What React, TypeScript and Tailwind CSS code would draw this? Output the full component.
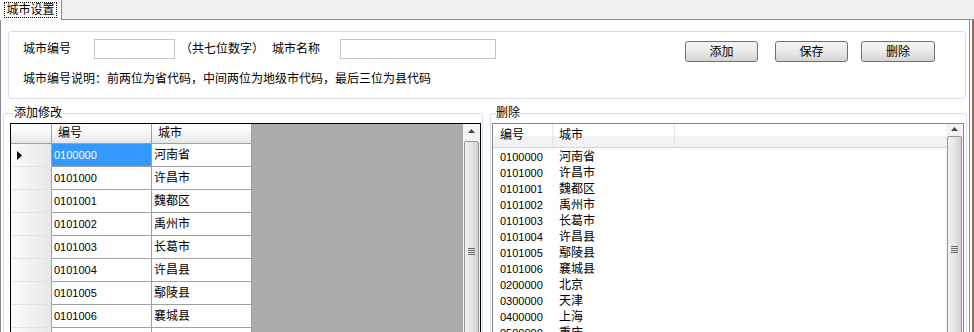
import type { ReactNode } from "react";

const cities: [string, string][] = [
  ["0100000", "河南省"],
  ["0101000", "许昌市"],
  ["0101001", "魏都区"],
  ["0101002", "禹州市"],
  ["0101003", "长葛市"],
  ["0101004", "许昌县"],
  ["0101005", "鄢陵县"],
  ["0101006", "襄城县"],
  ["0200000", "北京"],
  ["0300000", "天津"],
  ["0400000", "上海"],
  ["0500000", "重庆"],
];

function Button({ label, className }: { label: string; className: string }) {
  return (
    <button
      className={`mt-[2px] flex h-[21px] items-center justify-center rounded-[3px] border border-[#707070] bg-gradient-to-b from-[#f6f6f6] via-[#e9e9e9] to-[#d4d4d4] text-[12px] ${className}`}
    >
      {label}
    </button>
  );
}

function ScrollBar({ thumb }: { thumb: string }) {
  return (
    <div className="flex w-[17px] shrink-0 flex-col bg-[#f3f3f3]">
      <div className="flex h-[17px] items-center justify-center">
        <svg width="7" height="4" viewBox="0 0 7 4">
          <path d="M3.5 0 L7 4 L0 4 Z" fill="#4a4a4a" />
        </svg>
      </div>
      <div
        className={`mx-[1px] mt-[2px] flex items-center justify-center rounded-[2px] border border-[#979797] bg-gradient-to-r from-[#f2f2f2] via-[#e6e6e6] to-[#d2d2d2] ${thumb}`}
      >
        <div className="flex flex-col gap-[1px]">
          <div className="h-px w-[7px] bg-[#6a6a6a]" />
          <div className="h-px w-[7px] bg-[#6a6a6a]" />
          <div className="h-px w-[7px] bg-[#6a6a6a]" />
          <div className="h-px w-[7px] bg-[#6a6a6a]" />
        </div>
      </div>
    </div>
  );
}

function GroupBox({ title, className, children }: { title: string; className: string; children: ReactNode }) {
  return (
    <div className={`relative rounded-[3px] border border-[#d5dfe5] ${className}`}>
      <span className="absolute -top-[8px] bg-white leading-[14px]" style={{ left: title === "删除" ? 5 : 10 }}>
        {title}
      </span>
      {children}
    </div>
  );
}

export default function App() {
  return (
    <div
      className="flex h-[332px] w-[974px] flex-col overflow-hidden bg-white text-[12px] text-black"
      style={{ fontFamily: '"Liberation Sans", "Noto Sans CJK SC", sans-serif' }}
    >
      {/* tab strip */}
      <div className="flex h-[20px] shrink-0 border-b border-[#898c95] bg-[#f0f0f0]">
        <div className="relative z-10 -mb-px flex h-[20px] w-[62px] items-center justify-center border-r border-[#898c95] bg-white">
          <span className="border border-dotted border-black px-[1px] leading-[14px]">城市设置</span>
        </div>
      </div>

      <div className="flex flex-1">
        <div className="flex w-[970px] flex-col border-l border-r border-[#898c95]">
          {/* top settings group */}
          <div className="ml-[7px] mt-[11px] flex h-[68px] w-[958px] flex-col rounded-[3px] border border-[#d5dfe5] pl-[14px]">
            <div className="mt-[7px] flex h-[22px] items-start">
              <span className="w-[71px] leading-[20px]">城市编号</span>
              <div className="h-[20px] w-[81px] border border-[#c3c7cc] bg-white" />
              <span className="ml-[5px] w-[84px] leading-[20px]">（共七位数字）</span>
              <span className="ml-[8px] w-[68px] leading-[20px]">城市名称</span>
              <div className="h-[20px] w-[156px] border border-[#c3c7cc] bg-white" />
              <Button label="添加" className="ml-[189px] w-[73px]" />
              <Button label="保存" className="ml-[17px] w-[73px]" />
              <Button label="删除" className="ml-[13px] w-[74px]" />
            </div>
            <div className="mt-[10px] leading-[16px]">
              城市编号说明：前两位为省代码，中间两位为地级市代码，最后三位为县代码
            </div>
          </div>

          {/* bottom groups */}
          <div className="mt-[14px] flex">
            <GroupBox title="添加修改" className="ml-[2px] h-[260px] w-[480px] pl-[6px] pt-[9px]">
              <div className="flex h-[240px] w-[471px] border border-black">
                <div className="flex-1 bg-[#ababab]">
                  <div className="w-[241px]">
                    <div className="flex h-[20px] border-b border-[#a0a0a0] bg-gradient-to-b from-white via-[#f7f7f7] to-[#e6e6e6]">
                      <div className="w-[41px] border-r border-[#a0a0a0]" />
                      <div className="w-[100px] border-r border-[#a0a0a0] pl-[6px] leading-[19px]">编号</div>
                      <div className="w-[100px] border-r border-[#a0a0a0] pl-[6px] leading-[19px]">城市</div>
                    </div>
                    {cities.slice(0, 9).map(([code, name], i) => (
                      <div key={code} className="flex h-[23px]">
                        <div className="flex w-[41px] items-center border-r border-b border-r-[#a0a0a0] border-b-[#e4e4e4] bg-gradient-to-r from-[#fbfbfb] to-[#e8e8e8] pl-[6px]">
                          {i === 0 && (
                            <svg width="5" height="9" viewBox="0 0 5 9">
                              <path d="M0 0 L5 4.5 L0 9 Z" fill="#000" />
                            </svg>
                          )}
                        </div>
                        <div
                          className={`w-[100px] border-r border-b border-[#a0a0a0] pl-[2px] text-[11px] leading-[22px] ${
                            i === 0 ? "bg-[#3399ff] text-white" : "bg-white"
                          }`}
                        >
                          {code}
                        </div>
                        <div className="w-[100px] border-r border-b border-[#a0a0a0] bg-white pl-[2px] leading-[22px]">
                          {name}
                        </div>
                      </div>
                    ))}
                  </div>
                </div>
                <ScrollBar thumb="h-[258px]" />
              </div>
            </GroupBox>

            <GroupBox title="删除" className="ml-[7px] h-[260px] w-[477px] pl-[1px] pt-[9px]">
              <div className="flex h-[240px] w-[472px] border border-[#828790] bg-white">
                <div className="flex-1">
                  <div className="flex h-[24px] border-b border-[#d5d5d5] bg-gradient-to-b from-white from-50% to-[#f1f2f4] to-50%">
                    <div className="w-[60px] border-r border-[#e2e3e5] pl-[7px] leading-[23px]">编号</div>
                    <div className="w-[122px] border-r border-[#e2e3e5] pl-[6px] leading-[23px]">城市</div>
                    <div className="flex-1" />
                  </div>
                  <div className="pt-[1px]">
                    {cities.map(([code, name]) => (
                      <div key={code} className="flex h-[16px] leading-[16px]">
                        <div className="w-[60px] pl-[7px] text-[11px]">{code}</div>
                        <div className="w-[122px] pl-[6px]">{name}</div>
                      </div>
                    ))}
                  </div>
                </div>
                <ScrollBar thumb="h-[368px]" />
              </div>
            </GroupBox>
          </div>
        </div>
        <div className="w-[2px]" />
        <div className="w-[2px] bg-[#8a6a58]" />
      </div>
    </div>
  );
}
